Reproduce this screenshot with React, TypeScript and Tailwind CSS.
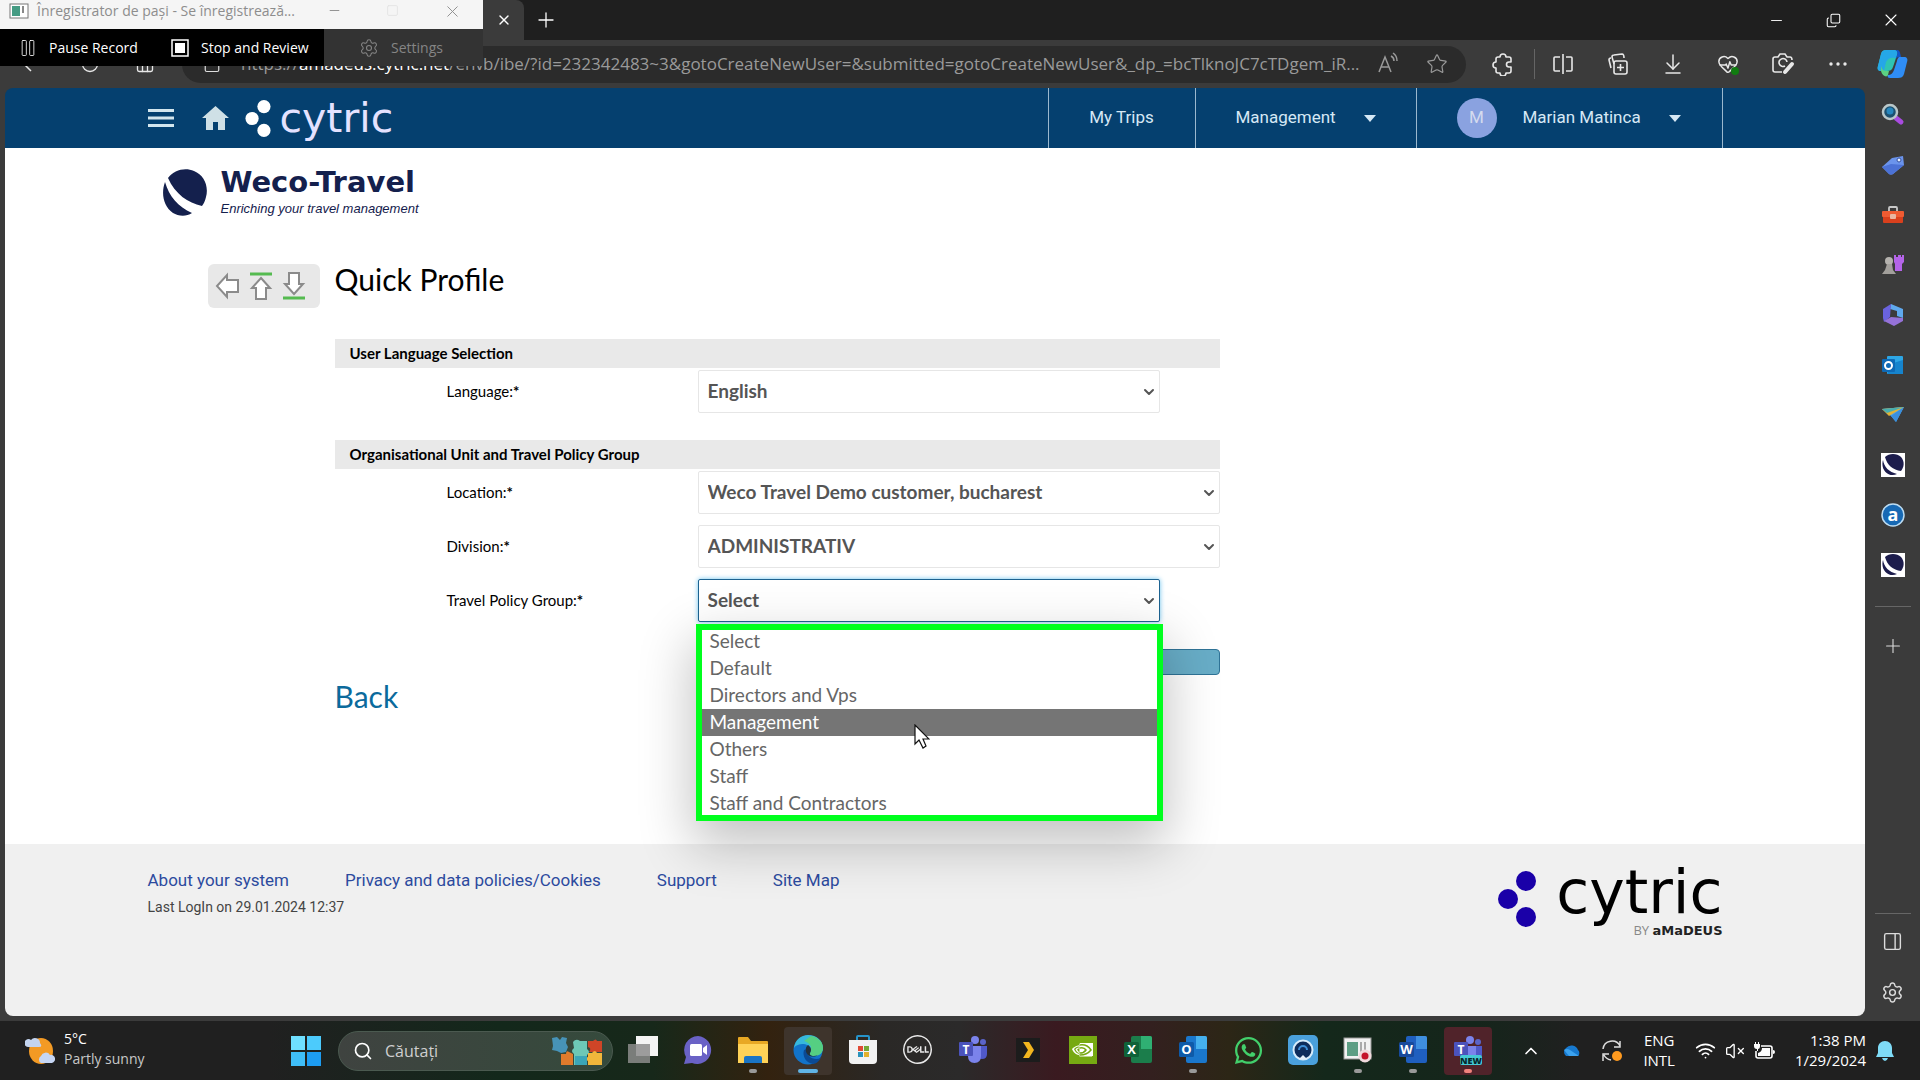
import { useState } from "react";
import type { ReactNode } from "react";

import {
    ArrowDownToLine,
    ChevronDown,
    ChevronUp,
    Copy,
    HeartPulse,
    House,
    Lock,
    Minus,
    PanelRight,
    Pause,
    Plus,
    RotateCw,
    Search,
    Settings,
    Square,
    Star,
    VolumeX,
    Wifi,
    X,
} from "lucide-react";
import { FaWhatsapp } from "react-icons/fa";
import { SiDell, SiNvidia } from "react-icons/si";

const policyGroups = [
    "Select",
    "Default",
    "Directors and Vps",
    "Management",
    "Others",
    "Staff",
    "Staff and Contractors",
];

const footerLinks = [
    "About your system",
    "Privacy and data policies/Cookies",
    "Support",
    "Site Map",
];

/* ---------- logos ---------- */

const CytricDots = ({ className }: { className: string }) => (
    <svg viewBox="0 0 38 56" className={className}>
        <circle cx="28" cy="10" r="10" />
        <circle cx="10" cy="28" r="10" />
        <circle cx="28" cy="46" r="10" />
    </svg>
);

const WecoBall = ({ className }: { className: string }) => (
    <svg viewBox="0 0 44 47" className={className}>
        <path
            d="M5 9C11 1 22-2 31 2c10 4 15 15 12 26-1 4-2 6-4 9C25 34 12 25 5 9Z"
            fill="#14204d"
        />
        <path
            d="M2 13c4 14 13 25 27 31-6 4-14 3-19 0C0 37-2 24 2 13Z"
            fill="#14204d"
        />
    </svg>
);

/* ---------- steps recorder window ---------- */

const RecorderWindow = () => (
    <section className="absolute left-0 top-0 z-20 w-[483px] text-sm">
        <div className="flex h-[29px] items-start bg-[#f5f5f5] text-[#8d8d8d]">
            <svg viewBox="0 0 20 16" className="ml-[9px] mt-[3px] h-4 w-5">
                <rect x="1" y="1" width="18" height="14" fill="#fff" stroke="#777" />
                <rect x="3" y="3" width="8" height="10" fill="#459b83" />
                <path d="M14 3v7" stroke="#888" strokeWidth="2" />
            </svg>
            <span className="ml-2 flex-1 whitespace-nowrap leading-[22px]">
                Înregistrator de pași - Se înregistrează...
            </span>
            <button aria-label="Minimize recorder" className="mr-11 mt-[3px]">
                <Minus size={15} strokeWidth={1.5} />
            </button>
            <button aria-label="Maximize recorder" className="mr-11 mt-1">
                <Square size={13} strokeWidth={1.5} className="text-[#e2e2e2]" />
            </button>
            <button aria-label="Close recorder" className="mr-[21px] mt-0.5">
                <X size={19} strokeWidth={1.2} />
            </button>
        </div>
        <div className="flex h-[37px] whitespace-nowrap bg-black text-white">
            <button className="flex w-[156px] items-center gap-[11px] pl-[18px]">
                <Pause size={20} strokeWidth={1} />
                Pause Record
            </button>
            <button className="flex w-[168px] items-center gap-3 pl-[15px]">
                <svg viewBox="0 0 18 18" className="h-[18px] w-[18px]">
                    <rect x="1" y="1" width="16" height="16" fill="none" stroke="#fff" strokeWidth="1.5" />
                    <rect x="4" y="4" width="10" height="10" fill="#fff" />
                </svg>
                Stop and Review
            </button>
            <button className="flex flex-1 items-center gap-3 bg-[#333] pl-[35px] text-[#858585]">
                <Settings size={20} strokeWidth={1.3} />
                Settings
            </button>
        </div>
    </section>
);

/* ---------- browser chrome ---------- */

const TitleBar = () => (
    <div className="flex h-10 shrink-0 bg-[#1f1f1f] text-white">
        <div className="flex w-[524px] items-center justify-end rounded-tr-lg bg-[#3b3b3b] pr-3">
            <button aria-label="Close tab">
                <X size={16} strokeWidth={2} />
            </button>
        </div>
        <button aria-label="New tab" className="ml-[10px]">
            <Plus size={24} strokeWidth={1.3} />
        </button>
        <div className="ml-auto flex">
            <button aria-label="Minimize" className="flex w-[57px] items-center justify-center">
                <Minus size={17} strokeWidth={1.3} />
            </button>
            <button aria-label="Restore" className="flex w-[57px] items-center justify-center">
                <Copy size={15} strokeWidth={1.7} className="-scale-x-100 rotate-180" />
            </button>
            <button aria-label="Close" className="flex w-[58px] items-center justify-center">
                <X size={20} strokeWidth={1.3} />
            </button>
        </div>
    </div>
);

const ToolButton = ({ name, children }: { name: string; children: ReactNode }) => (
    <button aria-label={name} className="flex w-[55px] items-center justify-center">
        {children}
    </button>
);

const CopilotIcon = () => (
    <svg viewBox="0 0 32 30" className="h-[30px] w-8">
        <path d="M9 1h8c3 0 4 2 3 5l-4 12c-1 3-3 4-6 4H4c-3 0-4-2-3-5L4 5c1-3 2-4 5-4Z" fill="#2fc4b2" />
        <path d="M9 1h8c3 0 4 2 3 5l-1 3c-5-1-8 0-10 4L7 22H4c-3 0-4-2-3-5L4 5c1-3 2-4 5-4Z" fill="#25a7e8" />
        <path d="M22 8h5c3 0 4 2 3 5l-3 12c-1 3-3 4-6 4h-8c-2 0-3-1-2-3 3 0 5-2 6-5l3-9c0-2 2-4 2-4Z" fill="#2f8df5" />
        <path d="M17 1h3c2 0 3 1 4 7h-2c-2 0-3 1-4 4l-2 6 4-12c1-3 0-5-3-5Z" fill="#1254c8" />
        <path d="M4 17c1 3 2 5 6 5h2l-1 4c-1 3-6 1-7-4Z" fill="#5cd082" />
    </svg>
);

const Toolbar = () => (
    <div className="flex h-12 shrink-0 items-center bg-[#3b3b3b] text-[#e8e8e8]">
        <div className="flex w-[182px] shrink-0 items-center">
            <button aria-label="Go back" className="ml-[21px]">
                <svg viewBox="0 0 20 20" className="h-5 w-5" fill="none" stroke="currentColor" strokeWidth="1.5">
                    <path d="M10 3 3 10l7 7M3 10h15" />
                </svg>
            </button>
            <button aria-label="Refresh" className="ml-[39px]">
                <RotateCw size={20} strokeWidth={1.6} />
            </button>
            <button aria-label="Home" className="ml-[35px]">
                <House size={20} strokeWidth={1.6} />
            </button>
        </div>
        <div className="flex h-[37px] min-w-0 flex-1 items-center rounded-full bg-[#2b2b2b] text-[17px] text-[#9a9a9a]">
            <Lock size={18} strokeWidth={1.6} className="ml-[21px] shrink-0 text-[#ddd]" />
            <div className="ml-5 w-[242px] shrink-0 overflow-hidden whitespace-nowrap">
                https://<span className="text-white">amadeus.cytric.net</span>/env
            </div>
            <div className="min-w-0 flex-1 overflow-hidden whitespace-nowrap">
                b/ibe/?id=232342483~3&amp;gotoCreateNewUser=&amp;submitted=gotoCreateNewUser&amp;_dp_=bcTlknoJC7cTDgem_iR...
            </div>
            <button aria-label="Read aloud" className="mr-[26px]">
                <svg viewBox="0 0 24 24" className="h-6 w-6" fill="none" stroke="currentColor" strokeWidth="1.5">
                    <path d="m3 20 6-15 6 15M5 15h8M15 4c2 1 3 3 3 5M17 1c3 2 4 5 4 8" />
                </svg>
            </button>
            <button aria-label="Add to favorites" className="mr-[18px]">
                <Star size={22} strokeWidth={1.3} />
            </button>
        </div>
        <div className="flex shrink-0">
            <div className="flex w-[69px] justify-center border-r border-[#656565] pl-[6px]">
                <button aria-label="Extensions">
                    <svg viewBox="0 0 22 24" className="h-6 w-[22px]" fill="none" stroke="currentColor" strokeWidth="1.6" strokeLinejoin="round">
                        <path d="M8 5a3 3 0 0 1 6 0h3q2 0 2 2v3h-2a2 2 0 0 0 0 5h2v4q0 2-2 2h-3a3 3 0 0 1-6 0H6q-2 0-2-2v-3a3 3 0 0 1 0-6V7q0-2 2-2Z" />
                    </svg>
                </button>
            </div>
            <ToolButton name="Split screen">
                <svg viewBox="0 0 22 22" className="h-[22px] w-[22px]" fill="none" stroke="currentColor" strokeWidth="1.6">
                    <path d="M11 1v20M8 4H3q-1 0-1 1v12q0 1 1 1h5M14 4h5q1 0 1 1v12q0 1-1 1h-5" />
                </svg>
            </ToolButton>
            <ToolButton name="Collections">
                <svg viewBox="0 0 22 22" className="h-[22px] w-[22px]" fill="none" stroke="currentColor" strokeWidth="1.6">
                    <rect x="7" y="8" width="13" height="13" rx="2" />
                    <path d="M13.500 11v7M10 14.500h7M4 15l-2-8q0-2 2-2M7 11l-2-7q0-2 2-2l8-1q2 0 2 4" />
                </svg>
            </ToolButton>
            <ToolButton name="Downloads">
                <ArrowDownToLine size={24} strokeWidth={1.5} />
            </ToolButton>
            <ToolButton name="Browser essentials">
                <span className="relative">
                    <HeartPulse size={22} strokeWidth={1.6} />
                    <span className="absolute bottom-0 right-0 h-2 w-2 rounded-full bg-[#107c10]" />
                </span>
            </ToolButton>
            <ToolButton name="Screenshot">
                <svg viewBox="0 0 24 24" className="h-6 w-6" fill="none" stroke="currentColor" strokeWidth="1.6">
                    <path d="M11 20H4q-2 0-2-2V7q0-2 2-2h3l2-3h5l2 3h3q2 0 2 3" />
                    <path d="M14 14a4 4 0 1 1 2-4" />
                    <path d="m14 20 7-8" strokeWidth="4" strokeLinecap="round" />
                </svg>
            </ToolButton>
            <ToolButton name="More">
                <svg viewBox="0 0 18 4" className="h-1 w-[18px]" fill="currentColor">
                    <circle cx="2" cy="2" r="1.700" />
                    <circle cx="9" cy="2" r="1.700" />
                    <circle cx="16" cy="2" r="1.700" />
                </svg>
            </ToolButton>
            <ToolButton name="Copilot">
                <CopilotIcon />
            </ToolButton>
        </div>
    </div>
);

const WecoTile = () => (
    <svg viewBox="0 0 24 24" className="h-6 w-6">
        <path d="M0 0h24v24H0z" fill="#fff" />
        <path d="M4 4c4-4 12-4 16 0 4 5 3 10 0 14C12 17 6 12 4 4Z" fill="#1c1c4c" />
        <path d="M2 7c1 7 6 12 14 14C8 25-1 17 2 7Z" fill="#1c1c4c" />
    </svg>
);

const sidebarItems: { name: string; icon: ReactNode }[] = [
    {
        name: "Search",
        icon: (
            <>
                <path d="m15 15 5 4" stroke="#a94be0" strokeWidth="5" strokeLinecap="round" />
                <circle cx="9" cy="9" r="7" fill="#1d506f" stroke="#b9c7c9" strokeWidth="2.500" />
                <circle cx="9" cy="8" r="3.500" fill="#2686bd" />
            </>
        ),
    },
    {
        name: "Shopping",
        icon: (
            <>
                <path d="m1 14 10-9 11-2 1 9-11 9q-2 1-4 0Z" fill="#6b94ec" />
                <path d="m1 14 9-3 13 1-11 9q-2 1-4 0Z" fill="#4c72d6" />
                <circle cx="18" cy="7" r="2" fill="#e4efff" stroke="#35519f" />
            </>
        ),
    },
    {
        name: "Tools",
        icon: (
            <>
                <path d="M8 8V5q0-1 1-1h6q1 0 1 1v3" fill="none" stroke="#c8c8c8" strokeWidth="1.800" />
                <rect x="1" y="8" width="22" height="6" rx="1" fill="#ef5b32" />
                <path d="M2 14h20v5q0 1-1 1H3q-1 0-1-1Z" fill="#d9401d" />
                <rect x="9" y="11" width="6" height="5" rx="1" fill="#e9b6a2" />
            </>
        ),
    },
    {
        name: "Games",
        icon: (
            <>
                <path d="M13 2h2v2h2V2h3v2h1V2h2v7l-2 2v7h-7v-7l-1-2Z" fill="#b464e8" />
                <circle cx="8" cy="8" r="4" fill="#b5b2ae" />
                <path d="M6 11h5l1 6 3 4H1l3-4Z" fill="#a29f9b" />
            </>
        ),
    },
    {
        name: "Microsoft 365",
        icon: (
            <>
                <path d="m10 1 12 5v9l-6-2V8L9 6Z" fill="#5fa9ee" />
                <path d="m2 6 8-5-1 13-6 5-1-4Z" fill="#6a63de" />
                <path d="m3 18 7-4 12 1v3l-9 5Z" fill="#9572d8" />
            </>
        ),
    },
    {
        name: "Outlook",
        icon: (
            <>
                <rect x="6" y="3" width="16" height="18" rx="1" fill="#2da6e5" />
                <path d="m6 12 16-5v13q0 1-1 1H7Z" fill="#1684cd" />
                <rect x="1" y="6" width="13" height="13" rx="1" fill="#0e69b5" />
                <circle cx="7.500" cy="12.500" r="3.500" fill="none" stroke="#fff" strokeWidth="2" />
            </>
        ),
    },
    {
        name: "Drop",
        icon: (
            <>
                <path d="m1 6 22-2-8 15-5-6Z" fill="#4aa5ea" />
                <path d="M1 6 23 4 8 13Z" fill="#e1b338" />
                <path d="M1 6 23 4 6 10Z" fill="#49aeb0" />
                <path d="m10 13 13-9-8 15Z" fill="#3a8fdd" />
            </>
        ),
    },
    { name: "Weco-Travel", icon: null },
    {
        name: "Amadeus",
        icon: (
            <>
                <circle cx="12" cy="12" r="11" fill="#1769b4" stroke="#bcdcf2" strokeWidth="1.500" />
                <text x="12" y="17.500" textAnchor="middle" fontSize="18" fontWeight="700" fontFamily="Open Sans, sans-serif" fill="#fff">
                    a
                </text>
            </>
        ),
    },
    { name: "Weco", icon: null },
];

const Sidebar = () => (
    <aside className="flex w-[55px] shrink-0 flex-col items-center pt-[2px] text-[#dcdcdc]">
        {sidebarItems.map(({ name, icon }) => (
            <button key={name} aria-label={name} className="flex h-[50px] items-center">
                {icon ? (
                    <svg viewBox="0 0 24 24" className="h-6 w-6">
                        {icon}
                    </svg>
                ) : (
                    <WecoTile />
                )}
            </button>
        ))}
        <hr className="mt-4 w-9 border-[#666]" />
        <button aria-label="Customize" className="mt-7">
            <Plus size={22} strokeWidth={1.2} />
        </button>
        <hr className="mt-auto w-9 border-[#666]" />
        <button aria-label="Hide sidebar" className="mt-[17px]">
            <PanelRight size={21} strokeWidth={1.6} />
        </button>
        <button aria-label="Sidebar settings" className="mb-3 mt-[29px]">
            <Settings size={23} strokeWidth={1.5} />
        </button>
    </aside>
);

/* ---------- page ---------- */

const Caret = () => (
    <svg viewBox="0 0 12 7" className="h-[7px] w-3 fill-[#d6e8f5]">
        <path d="M0 0h12L6 7Z" />
    </svg>
);

const PageHeader = () => (
    <header className="bg-[#05406f] font-[Roboto,sans-serif] text-[17px] text-[#d6e8f5]">
        <div className="mx-auto flex h-[60px] max-w-[1575px] items-center">
            <button aria-label="Menu">
                <svg viewBox="0 0 26 18" className="h-[18px] w-[26px] fill-[#d3e6ee]">
                    <path d="M0 0h26v3H0zM0 7.500h26v3H0zM0 15h26v3H0z" />
                </svg>
            </button>
            <a href="#home" aria-label="Home" className="ml-7">
                <svg viewBox="0 0 27 24" className="h-6 w-[27px] fill-[#cfe0e6]">
                    <path d="M13.500 0 27 12h-4v12h-7v-8h-5v8H4V12H0Z" />
                </svg>
            </a>
            <CytricDots className="ml-4 h-[37px] w-[26px] fill-white" />
            <span className="ml-[9px] font-[DejaVu_Sans,sans-serif] text-[41px] leading-[44px] text-[#e4e2ff]">
                cytric
            </span>
            <nav className="ml-auto flex self-stretch">
                <a href="#trips" className="flex w-[147px] items-center justify-center border-l border-[#9bb8ce]">
                    My Trips
                </a>
                <button className="flex w-[221px] items-center justify-between border-l border-[#9bb8ce] px-10">
                    Management
                    <Caret />
                </button>
                <button className="flex w-[307px] items-center border-x border-[#9bb8ce] pl-10">
                    <span className="mr-[26px] flex h-10 w-10 items-center justify-center rounded-full bg-[#8aa2e0] text-[#d5dbee]">
                        M
                    </span>
                    Marian Matinca
                    <span className="ml-[28px]">
                        <Caret />
                    </span>
                </button>
            </nav>
        </div>
    </header>
);

interface FieldProps {
    id: string;
    label: string;
    options: string[];
    wide?: boolean;
    active?: boolean;
    children?: ReactNode;
}

const Field = ({ id, label, options, wide = false, active = false, children }: FieldProps) => (
    <div className="flex items-center">
        <label htmlFor={id} className="w-[363px] shrink-0 pl-28 text-[15px] text-black">
            {label}:<b>*</b>
        </label>
        <div className={`relative ${wide ? "w-[522px]" : "w-[462px]"}`}>
            <select
                id={id}
                className={`block h-[43px] w-full appearance-none rounded-xs border bg-white pl-[9px] text-[19px] font-bold text-[#555] outline-none ${
                    active
                        ? "border-[#1d6391] shadow-[0_0_5px_#6cc3ee]"
                        : "border-[#e6e6e6]"
                }`}
            >
                {options.map((option) => (
                    <option key={option}>{option}</option>
                ))}
            </select>
            <ChevronDown
                size={16}
                strokeWidth={3}
                className="pointer-events-none absolute right-[3px] top-[14px] text-[#555]"
            />
            {children}
        </div>
    </div>
);

const Cursor = () => (
    <svg viewBox="0 0 16 25" className="pointer-events-none absolute left-[214px] top-[96px] h-[25px] w-4">
        <path d="M1 1v19l4-4 4 8 3-2-3-7h6Z" fill="#fff" stroke="#111" strokeWidth="1.200" />
    </svg>
);

const PolicyList = () => {
    const [hovered, setHovered] = useState("Management");

    return (
        <div className="absolute left-[2px] top-[49px] z-10 w-[459px] bg-white shadow-[0_20px_50px_8px_rgba(0,0,0,0.24)]">
            <ul role="listbox" aria-label="Travel Policy Group" className="outline-6 -outline-offset-2 outline-[#00ff1e]">
                {policyGroups.map((name) => (
                    <li
                        key={name}
                        role="option"
                        aria-selected={name === hovered}
                        onMouseEnter={() => setHovered(name)}
                        className={`h-[27px] pl-[10px] text-[19px] leading-[26px] ${
                            name === hovered ? "bg-[#757575] text-white" : "text-[#666]"
                        }`}
                    >
                        {name}
                    </li>
                ))}
            </ul>
            <Cursor />
        </div>
    );
};

const SectionTitle = ({ children }: { children: ReactNode }) => (
    <h2 className="mb-0.5 h-[29px] bg-[#e9e9e9] pl-[15px] text-[15px] font-bold leading-[29px] text-black">
        {children}
    </h2>
);

const ScrollNav = () => (
    <div className="flex h-11 w-28 shrink-0 items-center gap-[9px] rounded-md bg-[#e8e8e8] pl-[7px]">
        <button aria-label="Previous page">
            <svg viewBox="0 0 25 28" className="h-7 w-[25px]" fill="#fff" stroke="#8b8b8b" strokeWidth="2">
                <path d="M2 14 12 3v5h11v12H12v5Z" />
            </svg>
        </button>
        <button aria-label="Top of page">
            <svg viewBox="0 0 24 28" className="h-7 w-6" fill="#fff" stroke="#8b8b8b" strokeWidth="2">
                <path d="M1 2h22" stroke="#55bb50" strokeWidth="3" />
                <path d="m12 6 9 10h-4v11H7V16H3Z" />
            </svg>
        </button>
        <button aria-label="Bottom of page">
            <svg viewBox="0 0 24 28" className="h-7 w-6" fill="#fff" stroke="#8b8b8b" strokeWidth="2">
                <path d="M1 26h22" stroke="#55bb50" strokeWidth="3" />
                <path d="m12 22 9-10h-4V1H7v11H3Z" />
            </svg>
        </button>
    </div>
);

const QuickProfile = () => (
    <main className="flex-1 bg-white">
        <div className="mx-auto max-w-[1575px] pt-[21px] font-[Lato,sans-serif]">
            <div className="flex h-12 items-start pl-[15px]">
                <WecoBall className="h-[47px] w-11" />
                <div className="ml-[14px] whitespace-nowrap text-[#14204d]">
                    <div className="font-[DejaVu_Sans,sans-serif] text-[29px] font-bold leading-[26px]">
                        Weco-Travel
                    </div>
                    <div className="mt-1 font-[Liberation_Sans,sans-serif] text-[13px] italic leading-5">
                        Enriching your travel management
                    </div>
                </div>
            </div>
            <div className="mt-[47px] flex gap-[15px] pl-[60px]">
                <ScrollNav />
                <form className="w-[885px]">
                    <h1 className="mb-[45px] text-[30px] leading-[30px] text-black">Quick Profile</h1>
                    <SectionTitle>User Language Selection</SectionTitle>
                    <Field id="language" label="Language" options={["English"]} />
                    <div className="h-[27px]" />
                    <SectionTitle>Organisational Unit and Travel Policy Group</SectionTitle>
                    <div className="flex flex-col gap-[11px]">
                        <Field id="location" label="Location" options={["Weco Travel Demo customer, bucharest"]} wide />
                        <Field id="division" label="Division" options={["ADMINISTRATIV"]} wide />
                        <Field id="policy" label="Travel Policy Group" options={policyGroups} active>
                            <PolicyList />
                        </Field>
                    </div>
                    <div className="mt-[27px] flex justify-end">
                        <button
                            type="button"
                            aria-label="Continue"
                            className="h-[26px] w-[120px] rounded-sm border border-[#2f7396] bg-[#68adc7]"
                        />
                    </div>
                    <a href="#back" className="mt-[6px] block w-fit text-[30px] leading-[30px] text-[#0b6a9c]">
                        Back
                    </a>
                </form>
            </div>
        </div>
    </main>
);

const PageFooter = () => (
    <footer className="h-[172px] shrink-0 bg-[#f0f0f0] font-[Roboto,sans-serif]">
        <div className="mx-auto flex max-w-[1575px] justify-between pt-[25px]">
            <div>
                <nav className="flex gap-14 text-[17px] leading-[22px] text-[#2c4a9e]">
                    {footerLinks.map((link) => (
                        <a key={link} href="#footer">
                            {link}
                        </a>
                    ))}
                </nav>
                <p className="mt-[6px] text-sm leading-5 text-[#444]">Last LogIn on 29.01.2024 12:37</p>
            </div>
            <div className="flex">
                <CytricDots className="mt-[2px] h-14 w-[38px] fill-[#1a00a8]" />
                <div className="ml-5 flex flex-col items-end text-black">
                    <span className="font-[DejaVu_Sans,sans-serif] text-[60px] leading-[46px]">cytric</span>
                    <span className="mt-[7px] font-[Open_Sans,sans-serif] text-[13px] leading-4 text-[#888]">
                        BY <b className="font-[DejaVu_Sans,sans-serif] text-[#222]">aMaDEUS</b>
                    </span>
                </div>
            </div>
        </div>
    </footer>
);

/* ---------- taskbar ---------- */

const TeamsShape = () => (
    <>
        <circle cx="17" cy="5" r="4" fill="#7b83eb" />
        <circle cx="25" cy="7" r="3" fill="#5b64c9" />
        <path d="M20 11h9v8q0 5-5 5-4 0-4-4Z" fill="#5059c9" />
        <path d="M10 11h13v10q0 7-6.500 7T10 21Z" fill="#7b83eb" />
        <rect x="1" y="7" width="14" height="14" rx="1" fill="#4b53bc" />
        <text x="8" y="18.500" textAnchor="middle" fontSize="12" fontWeight="700" fill="#fff">T</text>
    </>
);

const OfficeShape = ({ letter, light, base, dark }: { letter: string; light: string; base: string; dark: string }) => (
    <>
        <rect x="8" y="1" width="21" height="27" rx="2" fill={base} />
        <path d="M18 1h9q2 0 2 2v11H18Z" fill={light} />
        <rect x="1" y="7" width="15" height="15" rx="1.500" fill={dark} />
        <text x="8.500" y="19" textAnchor="middle" fontSize="13" fontWeight="700" fill="#fff">{letter}</text>
    </>
);

interface TaskApp {
    name: string;
    icon: ReactNode;
    mark?: "dot" | "bar" | "alert";
}

const taskApps: TaskApp[] = [
    {
        name: "Task view",
        icon: (
            <>
                <rect x="8" y="1" width="22" height="20" fill="#f4f4f4" />
                <rect x="0" y="9" width="22" height="19" fill="#8c8c8c" fillOpacity="0.85" />
            </>
        ),
    },
    {
        name: "Chat",
        icon: (
            <>
                <path d="M15 1a14 14 0 1 1-6 27l-8 1 2-7A14 14 0 0 1 15 1Z" fill="#6a62c6" />
                <rect x="7" y="9" width="12" height="12" rx="1.500" fill="#fff" />
                <path d="m20 13 4-3v10l-4-3Z" fill="#fff" />
            </>
        ),
    },
    {
        name: "File Explorer",
        mark: "dot",
        icon: (
            <>
                <path d="M0 3q0-1 1-1h9l3 4h16q1 0 1 1v21H0Z" fill="#e8a824" />
                <path d="M0 9h30v19H0Z" fill="#ffd257" />
                <path d="M6 28v-5q0-2 2-2h14q2 0 2 2v5Z" fill="#1a74c4" />
            </>
        ),
    },
    {
        name: "Edge",
        mark: "bar",
        icon: (
            <>
                <circle cx="15" cy="15" r="14.500" fill="#1273c9" />
                <path d="M1 13C2 5 8 0 15 0c9 0 15 6 15 13 0 5-4 8-9 8-3 0-5-1-4-3 2-3 0-8-6-9-5 0-8 1-10 4Z" fill="#37b8dc" />
                <path d="M18 1c7 1 12 6 12 12 0 5-4 8-9 8-3 0-5-1-4-3 3-6 0-10-6-12Z" fill="#55cf82" />
                <path d="M11 15c-2 6 2 13 9 14 3 0 6-3 8-6-7 3-15-1-14-9Z" fill="#0b4a94" />
                <path d="M17 18c2-3 1-6-2-8-3 2-3 7 0 10 3 2 7 2 10 0-4 2-9 1-8-2Z" fill="#24313a" />
            </>
        ),
    },
    {
        name: "Store",
        icon: (
            <>
                <path d="M9 6V2q0-1 1-1h10q1 0 1 1v4" fill="none" stroke="#2693c9" strokeWidth="2" />
                <path d="M1 5h28v20q0 4-4 4H5q-4 0-4-4Z" fill="#f2f2f2" />
                <path d="M10 11h5v5h-5z" fill="#e04a35" />
                <path d="M16 11h5v5h-5z" fill="#74a936" />
                <path d="M10 17h5v5h-5z" fill="#2b93bd" />
                <path d="M16 17h5v5h-5z" fill="#e2b12c" />
            </>
        ),
    },
    { name: "Dell", icon: <SiDell size={29} color="#e9e9e9" /> },
    { name: "Teams", icon: <TeamsShape /> },
    {
        name: "Plex",
        icon: (
            <>
                <rect x="3" y="3" width="24" height="24" fill="#1c1c1c" />
                <path d="M10 7h6l5 8-5 8h-6l5-8Z" fill="#f2b61f" />
            </>
        ),
    },
    {
        name: "NVIDIA",
        icon: (
            <>
                <rect x="1" y="1" width="28" height="28" fill="#76a912" />
                <path d="M12 8h13v13H12Z" fill="#fff" />
                <SiNvidia x="4" y="5" size={20} color="#fff" />
                <path d="M12 10q7-1 11 5-4 5-11 5M12 13q4-1 6 2-2 3-6 3" fill="none" stroke="#76a912" strokeWidth="1.500" />
            </>
        ),
    },
    { name: "Excel", icon: <OfficeShape letter="X" light="#2fb073" base="#1b7d4b" dark="#0f6238" /> },
    { name: "Outlook", mark: "dot", icon: <OfficeShape letter="O" light="#45b0ee" base="#1a77cc" dark="#0e5aa8" /> },
    { name: "WhatsApp", icon: <FaWhatsapp size={31} color="#42cf6b" /> },
    {
        name: "Phone Link",
        icon: (
            <>
                <rect x="0" y="0" width="30" height="30" rx="5" fill="#4aa0dc" />
                <circle cx="15" cy="15" r="9.500" fill="#0e2d5c" stroke="#d7ecfb" strokeWidth="2" />
                <path d="M11 15a4 4 0 0 1 8 0" fill="none" stroke="#3f8fd8" strokeWidth="2" />
                <path d="m11 24 4-4 4 4Z" fill="#e6f1fa" />
            </>
        ),
    },
    {
        name: "Steps Recorder",
        mark: "dot",
        icon: (
            <>
                <rect x="1" y="3" width="27" height="21" fill="#f2f2f2" stroke="#999" />
                <rect x="4" y="7" width="11" height="14" fill="#5d9e84" />
                <path d="M18 7v11M22 7v8" stroke="#aaa" strokeWidth="2" />
                <circle cx="22" cy="21" r="6.500" fill="#f0d9dc" />
                <circle cx="22" cy="21" r="3.500" fill="#c4132b" />
            </>
        ),
    },
    { name: "Word", mark: "dot", icon: <OfficeShape letter="W" light="#3f8fe0" base="#1f5fbf" dark="#174a9c" /> },
    {
        name: "Teams New",
        mark: "alert",
        icon: (
            <>
                <TeamsShape />
                <rect x="7" y="20" width="22" height="10" rx="2" fill="#45c9d4" />
                <text x="18" y="28.500" textAnchor="middle" fontSize="9" fontWeight="800" fill="#06282c">NEW</text>
            </>
        ),
    },
];

const tileStyles = {
    none: "",
    dot: "",
    bar: "bg-[#3e342c]",
    alert: "bg-[#50232a]",
};

const markStyles = {
    none: "bg-transparent w-2",
    dot: "bg-[#999] w-2",
    bar: "bg-[#60b4e6] w-5",
    alert: "bg-[#f0827c] w-2",
};

const Taskbar = () => (
    <footer className="flex h-[59px] shrink-0 items-center bg-[linear-gradient(90deg,#202020_14%,#13281b_26%,#17281a_34%,#33220f_40%,#2a2826_46%,#2b2a2a_50%,#3a1a20_55%,#33201f_60%,#2c2616_64%,#14281b_69%,#15251b_77%,#202020_82%)] text-white">
        <button className="ml-[25px] flex w-[266px] items-center gap-[9px] text-left text-sm">
            <svg viewBox="0 0 30 30" className="h-[30px] w-[30px]">
                <ellipse cx="16" cy="15" rx="12" ry="13" fill="#f39a24" />
                <path d="M4 11a4 4 0 1 1 2-7 5 5 0 0 1 9 3q3 4-1 4Z" fill="#c4d4ef" />
                <path d="M16 27a4 4 0 0 1 0-7 5 5 0 0 1 9-1 4 4 0 0 1 2 8Z" fill="#c6d6f4" />
            </svg>
            <span className="pb-[3px] leading-5">
                5°C
                <br />
                <span className="text-[#c8c8c8]">Partly sunny</span>
            </span>
        </button>
        <button aria-label="Start">
            <svg viewBox="0 0 30 30" className="h-[30px] w-[30px]">
                <path d="M0 0h14v14H0z" fill="#6fe0ff" />
                <path d="M16 0h14v14H16z" fill="#4ccbfc" />
                <path d="M0 16h14v14H0z" fill="#3fbef8" />
                <path d="M16 16h14v14H16z" fill="#1d9df2" />
            </svg>
        </button>
        <label className="ml-[17px] flex h-10 w-[275px] items-center rounded-full border border-[#4b5a50] bg-[linear-gradient(90deg,#3f4340,#354a3c)] pl-[14px]">
            <Search size={20} strokeWidth={2} />
            <input
                aria-label="Căutați"
                placeholder="Căutați"
                className="ml-3 w-[166px] bg-transparent text-base outline-none placeholder:text-[#cfcfcf]"
            />
            <svg viewBox="0 0 52 30" className="h-[30px] w-[52px] shrink-0">
                <path d="m1 2 5-1 3 3 2-3 5 1-1 5 2 4-2 5-5 1-4-2-5-1 1-4Z" fill="#4793b8" />
                <path d="M10 18h5q0-4 3-2l4 2v11H10Z" fill="#e07b2c" />
                <path d="M22 6q3-4 7-1h7v8q4 3 0 6v10H23V18q-4-3 0-6Z" fill="#6dc8b6" />
                <path d="M37 5h5q3-3 4 0h5v11H38q3-4-1-5Z" fill="#cf4527" />
                <path d="M37 17h4q3-4 5 0h5v12H37v-4q-5-3 0-4Z" fill="#f1b63b" />
                <path d="M24 20h12v9H24z" fill="#3ba6b8" />
            </svg>
        </label>
        <div className="ml-[2px] flex font-[Open_Sans,sans-serif]">
            {taskApps.map(({ name, icon, mark = "none" as const }) => (
                <div key={name} className="w-[55px]">
                    <button
                        aria-label={name}
                        className={`mx-auto flex h-12 w-12 flex-col items-center rounded-sm pt-2 ${tileStyles[mark]}`}
                    >
                        <svg viewBox="0 0 30 30" className="h-[30px] w-[30px] shrink-0">
                            {icon}
                        </svg>
                        <span className={`mt-1 h-1 rounded-full ${markStyles[mark]}`} />
                    </button>
                </div>
            ))}
        </div>
        <div className="ml-auto flex items-center">
            <button aria-label="Show hidden icons" className="mr-5">
                <ChevronUp size={20} strokeWidth={2} />
            </button>
            <svg viewBox="0 0 20 13" className="mr-5 h-[13px] w-5">
                <path d="M5 12a5 5 0 0 1 0-8 7 7 0 0 1 12 2 4 4 0 0 1 0 6Z" fill="#1779cf" />
                <path d="M8 12 3 6q3-2 6 0l9 6Z" fill="#3ba2ef" />
            </svg>
            <svg viewBox="0 0 22 22" className="h-[22px] w-[22px]" fill="none" stroke="#ddd" strokeWidth="1.500">
                <path d="M2 9a9 9 0 0 1 17-3M19 1v6h-6M2 21v-7h6M3 15q2 4 7 5" />
                <circle cx="16" cy="16" r="5" fill="#ff9a1f" stroke="none" />
            </svg>
            <span className="ml-5 pb-[2px] text-center text-[15px] leading-5">
                ENG
                <br />
                INTL
            </span>
            <button aria-label="Network, sound and battery" className="ml-5 flex items-center gap-[9px]">
                <Wifi size={21} strokeWidth={2} />
                <VolumeX size={20} strokeWidth={1.6} />
                <svg viewBox="0 0 21 18" className="h-[18px] w-[21px]">
                    <path d="M7 4h9q2 0 2 2v8q0 2-2 2H4q-2 0-2-2V9" fill="none" stroke="#fff" strokeWidth="1.600" />
                    <path d="M8 6h8v8H4v-3q4-1 4-5Z" fill="#fff" />
                    <path d="M19 8q2 0 2 2t-2 2ZM1 0h1v2h2V0h1v2h1v2q0 3-2 3v2H3V7Q0 7 0 4V2h1Z" fill="#fff" />
                </svg>
            </button>
            <span className="ml-5 pb-[2px] text-right text-[15px] leading-5">
                1:38 PM
                <br />
                1/29/2024
            </span>
            <button aria-label="Notifications" className="ml-[10px] mr-[26px]">
                <svg viewBox="0 0 18 20" className="h-5 w-[18px] fill-[#7fdcf7]">
                    <path d="M9 0c4 0 7 3 7 7v5l2 4H0l2-4V7c0-4 3-7 7-7ZM6 17h6q-1 3-3 3t-3-3Z" />
                </svg>
            </button>
        </div>
    </footer>
);

const App = () => (
    <div className="relative flex min-h-screen flex-col bg-[#3b3b3b] font-[Open_Sans,sans-serif]">
        <RecorderWindow />
        <TitleBar />
        <Toolbar />
        <div className="mb-[5px] flex flex-1">
            <div className="ml-[5px] flex min-w-0 flex-1 flex-col overflow-hidden rounded-lg">
                <PageHeader />
                <QuickProfile />
                <PageFooter />
            </div>
            <Sidebar />
        </div>
        <Taskbar />
    </div>
);

export default App;
